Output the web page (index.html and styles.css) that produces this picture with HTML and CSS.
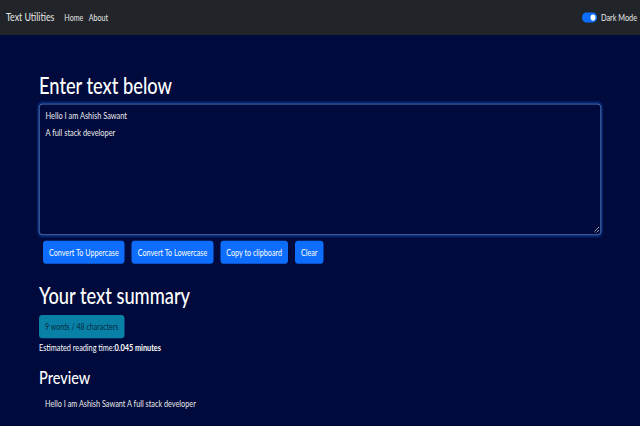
FILE: index.html
```html
<!DOCTYPE html>
<html lang="en">
<head>
<meta charset="utf-8">
<title>Text Utilities</title>
<link rel="stylesheet" href="styles.css">
</head>
<body>
<div class="viewport">
<div class="page">
  <nav class="navbar">
    <div class="nav-left">
      <span class="brand">Text Utilities</span>
      <a class="nav-link" href="#">Home</a>
      <a class="nav-link" href="#">About</a>
    </div>
    <div class="nav-right">
      <span class="switch"><span class="knob"></span></span>
      <span class="switch-label">Dark Mode</span>
    </div>
  </nav>
  <main class="container">
    <h1 class="title">Enter text below</h1>
    <div class="textbox">Hello I am Ashish Sawant<br>A full stack developer<span class="grip"></span></div>
    <div class="buttons">
      <button class="btn">Convert To Uppercase</button>
      <button class="btn">Convert To Lowercase</button>
      <button class="btn">Copy to clipboard</button>
      <button class="btn">Clear</button>
    </div>
    <h1 class="summary">Your text summary</h1>
    <div class="badge">9 words / 48 characters</div>
    <p class="reading">Estimated reading time:<b>0.045 minutes</b></p>
    <h2 class="preview-title">Preview</h2>
    <p class="preview">Hello I am Ashish Sawant A full stack developer</p>
  </main>
</div>
</div>
</body>
</html>
```
FILE: styles.css
```css
* { box-sizing: border-box; }
html, body { margin: 0; padding: 0; }
body {
  background: #000a3c;
  width: 640px;
  height: 426px;
  overflow: hidden;
}
.viewport {
  width: 640px;
  height: 426px;
  overflow: hidden;
}
.page {
  width: 1280px;
  height: 682px;
  transform: scale(0.5, 0.625);
  transform-origin: 0 0;
  color: #fff;
  font-family: Lato, "Liberation Sans", sans-serif;
  font-size: 14.6px;
  line-height: 24px;
}
.navbar {
  height: 56px;
  background: #212529;
  display: flex;
  align-items: center;
  justify-content: space-between;
  padding: 0 6px 0 12px;
}
.nav-left { display: flex; align-items: center; }
.brand { font-size: 17.6px; color: #e8e8e8; margin-right: 20px; }
.nav-link { font-size: 14.2px; color: #e8e8e8; text-decoration: none; margin-right: 11px; }
.nav-right { display: flex; align-items: center; }
.switch {
  width: 30px; height: 16px; border-radius: 8px;
  background: #0d6efd;
  display: flex; align-items: center; justify-content: flex-end;
  padding-right: 3px;
  margin-right: 8px;
}
.knob { width: 10px; height: 10px; border-radius: 50%; background: #fff; }
.switch-label { font-size: 14.6px; color: #e8e8e8; }
.container {
  padding: 0 78px;
}
.title {
  font-weight: 500;
  font-size: 36.5px;
  line-height: 48px;
  margin: 56px 0 0 0;
}
.textbox {
  position: relative;
  margin-top: 6px;
  height: 210px;
  border: 1px solid #86b7fe;
  border-radius: 6px;
  box-shadow: 0 0 0 4px rgba(13, 110, 253, 0.25);
  padding: 6px 12px;
  line-height: 25.5px;
  font-size: 14.8px;
  color: #ececec;
}
.grip {
  position: absolute; right: 3px; bottom: 3px;
  width: 9px; height: 9px;
  background: linear-gradient(135deg, transparent 40%, #999 40%, #999 52%, transparent 52%, transparent 68%, #999 68%, #999 80%, transparent 80%);
}
.buttons {
  display: flex;
  gap: 14px;
  margin: 9px 0 0 8px;
}
.btn {
  background: #0d6efd;
  color: #fff;
  border: none;
  border-radius: 6px;
  height: 37px;
  padding: 0 12px;
  font-family: inherit;
  font-size: 14.4px;
}
.summary {
  font-weight: 500;
  font-size: 36.5px;
  line-height: 48px;
  margin: 26px 0 0 0;
}
.badge {
  display: inline-block;
  margin-top: 8px;
  background: rgb(9, 128, 166);
  color: rgba(0, 20, 40, 0.85);
  border-radius: 6px;
  height: 37px;
  line-height: 37px;
  padding: 0 12px;
  font-size: 14.1px;
}
.reading { margin: 4px 0 0 0; }
.preview-title {
  font-weight: 500;
  font-size: 29px;
  line-height: 38px;
  margin: 15px 0 0 0;
}
.preview { margin: 12px 0 0 12px; color: #eaeaea; }
```
